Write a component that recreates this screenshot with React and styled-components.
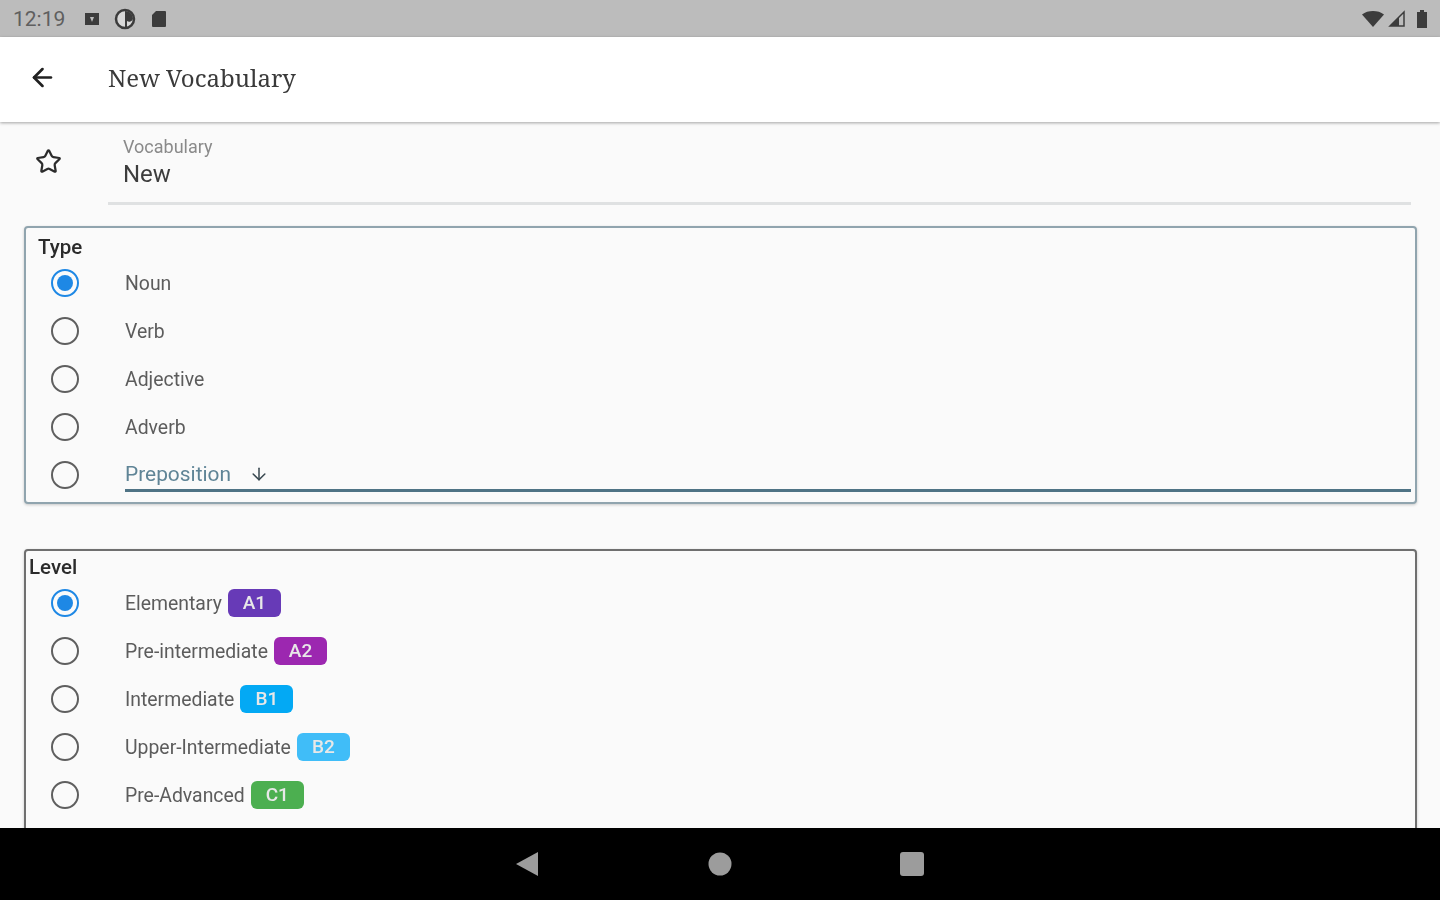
import styled, { createGlobalStyle } from 'styled-components';
import { ArrowLeft, ArrowDown, Star } from 'lucide-react';

const types = ['Noun', 'Verb', 'Adjective', 'Adverb'];

const levels = [
  { name: 'Elementary', code: 'A1', color: '#673ab7' },
  { name: 'Pre-intermediate', code: 'A2', color: '#9c27b0' },
  { name: 'Intermediate', code: 'B1', color: '#03a9f4' },
  { name: 'Upper-Intermediate', code: 'B2', color: '#40bdf8' },
  { name: 'Pre-Advanced', code: 'C1', color: '#4caf50' },
];

const App = () => {
  return (
    <>
      <GlobalStyle />
      <Screen>
        <StatusBar>
          <StatusLeft>
            <Clock>12:19</Clock>
            <svg width="16" height="16" viewBox="0 0 16 16">
              <path fill="#3c3c3c" d="M1 2h14v12H1z" />
              <path fill="#bcbcbc" d="M6 6h4l-2 5z" />
            </svg>
            <svg width="22" height="22" viewBox="0 0 22 22">
              <circle cx="11" cy="11" r="9" fill="#d8d8d8" stroke="#3c3c3c" strokeWidth="2.5" />
              <path fill="#3c3c3c" d="M11 3a8 8 0 0 1 8 8 4 4 0 0 1-6 2v6h-2z" />
            </svg>
            <SdCard width="16" height="18" viewBox="0 0 16 18">
              <path fill="#3c3c3c" d="M5 1h9a1 1 0 0 1 1 1v14a1 1 0 0 1-1 1H2a1 1 0 0 1-1-1V5z" />
            </SdCard>
          </StatusLeft>
          <StatusRight>
            <svg width="24" height="18" viewBox="0 0 24 18">
              <path fill="#3c3c3c" d="M1 4.5C4 2 8 1 12 1s8 1 11 3.5L12 17z" />
            </svg>
            <svg width="18" height="18" viewBox="0 0 18 18">
              <path fill="none" stroke="#3c3c3c" strokeWidth="1.5" d="M2 16 16 2v14z" />
              <path fill="#3c3c3c" d="M2 16 11 7v9z" />
            </svg>
            <Battery width="12" height="18" viewBox="0 0 12 18">
              <path fill="#3c3c3c" d="M4 0h4v2h3v16H1V2h3z" />
            </Battery>
          </StatusRight>
        </StatusBar>
        <AppBar>
          <BackButton><ArrowLeft size={29} strokeWidth={2.2} /></BackButton>
          <Title>New Vocabulary</Title>
        </AppBar>
        <Content>
          <NameRow>
            <StarSlot><Star size={27} strokeWidth={2} /></StarSlot>
            <NameField>
              <FieldLabel>Vocabulary</FieldLabel>
              <FieldValue>New</FieldValue>
            </NameField>
          </NameRow>
          <TypeCard>
            <CardTitle>Type</CardTitle>
            {types.map((t, i) => (
              <OptionRow key={t}>
                <Radio $checked={i === 0} />
                <OptionText>{t}</OptionText>
              </OptionRow>
            ))}
            <OptionRow>
              <Radio />
              <SelectField>
                <SelectText>Preposition</SelectText>
                <ArrowDown size={20} strokeWidth={1.8} color="#37474f" />
              </SelectField>
            </OptionRow>
          </TypeCard>
          <LevelCard>
            <LevelTitle>Level</LevelTitle>
            {levels.map((l, i) => (
              <OptionRow key={l.code}>
                <Radio $checked={i === 0} />
                <OptionText>{l.name}</OptionText>
                <Badge $color={l.color}>{l.code}</Badge>
              </OptionRow>
            ))}
          </LevelCard>
        </Content>
        <NavBar>
          <svg width="24" height="26" viewBox="0 0 24 26"><path fill="#9c9c9c" d="M22 1v24L0 13z" /></svg>
          <svg width="24" height="24" viewBox="0 0 24 24"><circle cx="12" cy="12" r="11.5" fill="#9c9c9c" /></svg>
          <svg width="24" height="24" viewBox="0 0 24 24"><rect width="24" height="24" rx="3" fill="#9c9c9c" /></svg>
        </NavBar>
      </Screen>
    </>
  );
};

export default App;

const GlobalStyle = createGlobalStyle`
  html, body {
    margin: 0;
    height: 100%;
    overflow: hidden;
  }

  body {
    background: #fafafa;
    font-family: Roboto, "Liberation Sans", sans-serif;
  }

  * {
    box-sizing: border-box;
  }
`;

const Screen = styled.div`
  display: flex;
  filter: blur(0.6px);
  flex-direction: column;
  height: 900px;
  overflow: hidden;
  width: 1440px;
`;

const StatusBar = styled.div`
  align-items: center;
  background: #bcbcbc;
  display: flex;
  flex: 0 0 37px;
  justify-content: space-between;
  padding: 0 12px 0 13px;
`;

const StatusLeft = styled.div`
  align-items: center;
  display: flex;
  gap: 14px;
`;

const Clock = styled.span`
  color: #5f5f5f;
  font-size: 21px;
  margin-right: 5px;
`;

const SdCard = styled.svg`
  margin-left: 1px;
`;

const StatusRight = styled.div`
  align-items: center;
  display: flex;
  gap: 3px;
`;

const Battery = styled.svg`
  margin-left: 7px;
`;

const AppBar = styled.header`
  align-items: center;
  background: #fff;
  box-shadow: 0 1px 3px rgba(0, 0, 0, 0.35);
  display: flex;
  flex: 0 0 85px;
  gap: 51px;
  padding: 0 0 4px 28px;
  position: relative;
`;

const BackButton = styled.div`
  color: #212121;
  display: flex;
`;

const Title = styled.h1`
  color: #3a3a3a;
  font-family: "Noto Serif", "DejaVu Serif", "Liberation Serif", serif;
  font-size: 24px;
  font-weight: 400;
  margin: 0;
`;

const Content = styled.main`
  display: flex;
  flex: 1;
  flex-direction: column;
  overflow: hidden;
  padding: 0 23px 0 24px;
`;

const NameRow = styled.div`
  display: flex;
  flex: 0 0 83px;
  margin-right: 6px;
`;

const StarSlot = styled.div`
  color: #2b2b2b;
  padding: 26px 0 0 11px;
  width: 84px;
`;

const NameField = styled.div`
  border-bottom: 3px solid #dfe1e2;
  display: flex;
  flex: 1;
  flex-direction: column;
  padding: 16px 0 0 15px;
`;

const FieldLabel = styled.span`
  color: #8a8a8a;
  font-size: 18px;
  line-height: 18px;
`;

const FieldValue = styled.span`
  color: #3d3d3d;
  font-size: 24px;
  line-height: 36px;
`;

const Card = styled.section`
  background: #fafafa;
  border: 2px solid #90a4ae;
  border-radius: 4px;
  box-shadow: 0 1px 3px rgba(0, 0, 0, 0.2);
  display: flex;
  flex-direction: column;
  flex-shrink: 0;
`;

const TypeCard = styled(Card)`
  height: 278px;
  margin-top: 21px;
`;

const LevelCard = styled(Card)`
  border-color: #6f6f6f;
  height: 300px;
  margin-top: 45px;
`;

const CardTitle = styled.h2`
  color: #2b2b2b;
  font-size: 20.5px;
  font-weight: 500;
  line-height: 23px;
  margin: 8px 0 0 12px;
`;

const LevelTitle = styled(CardTitle)`
  margin: 5px 0 0 3px;
`;

const OptionRow = styled.div`
  align-items: center;
  display: flex;
  flex: 0 0 48px;
  padding-left: 25px;
`;

const Radio = styled.span`
  background: ${({ $checked }) => ($checked ? '#1e88e5' : 'transparent')};
  background-clip: content-box;
  border: 2.5px solid ${({ $checked }) => ($checked ? '#1e88e5' : '#5f5f5f')};
  border-radius: 50%;
  flex-shrink: 0;
  height: 28px;
  margin-right: 46px;
  padding: 4px;
  width: 28px;
`;

const OptionText = styled.span`
  color: #5c5c5c;
  font-size: 19.4px;
`;

const SelectField = styled.div`
  align-items: center;
  align-self: flex-start;
  border-bottom: 3px solid #4f7385;
  display: flex;
  flex: 1;
  gap: 18px;
  height: 41px;
  margin-right: 4px;
  padding-top: 8px;
`;

const SelectText = styled.span`
  color: #5f8496;
  font-size: 20.9px;
`;

const Badge = styled.span`
  background: ${({ $color }) => $color};
  border-radius: 6px;
  color: #e8e8e8;
  font-size: 19px;
  font-weight: 500;
  line-height: 28px;
  margin-left: 6px;
  text-align: center;
  width: 53px;
`;

const NavBar = styled.nav`
  align-items: center;
  background: #000;
  display: flex;
  flex: 0 0 72px;
  gap: 168px;
  justify-content: center;
  position: relative;
`;
